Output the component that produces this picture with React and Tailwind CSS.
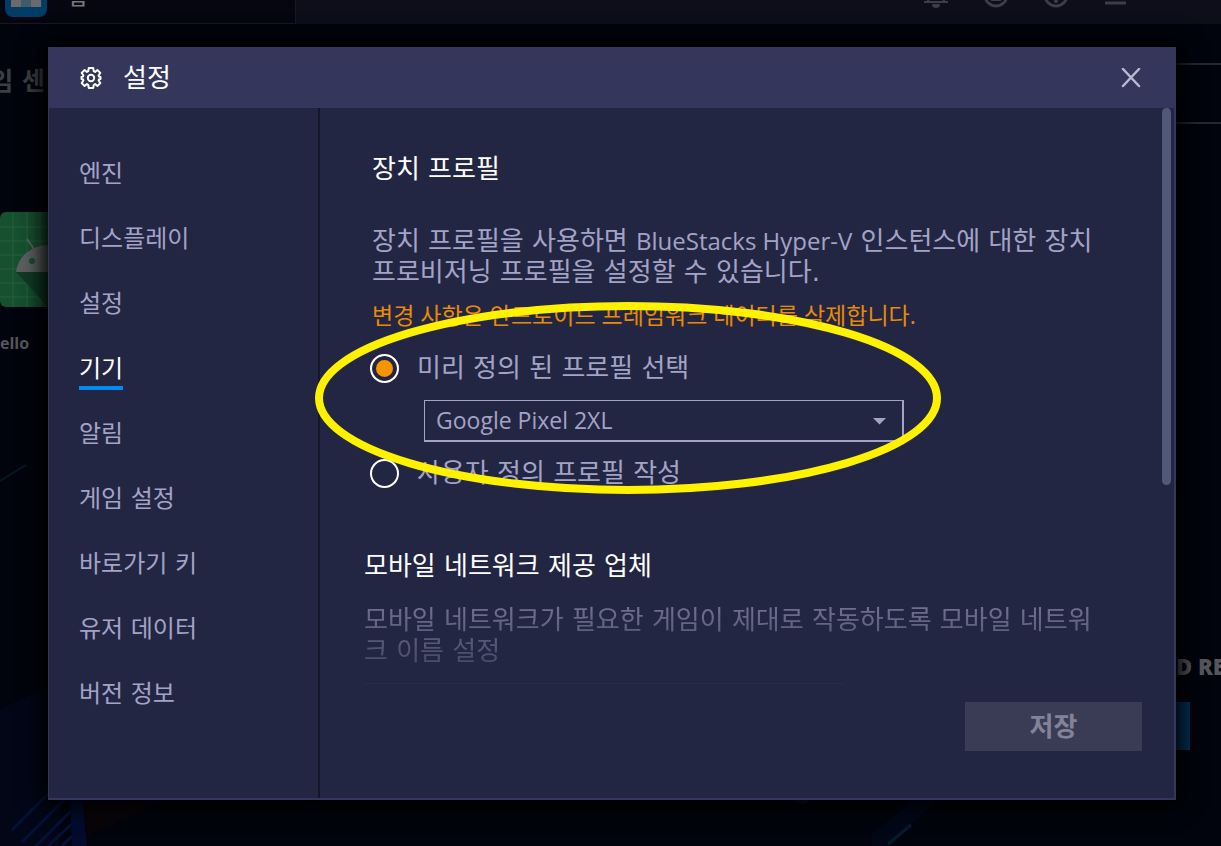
import React, { useState } from 'react';

const MENU_ITEMS = [
  { id: 'engine', label: '엔진' },
  { id: 'display', label: '디스플레이' },
  { id: 'settings', label: '설정' },
  { id: 'device', label: '기기' },
  { id: 'notifications', label: '알림' },
  { id: 'game', label: '게임 설정' },
  { id: 'shortcuts', label: '바로가기 키' },
  { id: 'userdata', label: '유저 데이터' },
  { id: 'about', label: '버전 정보' },
];

function GearIcon() {
  return (
    <svg width="24" height="24" viewBox="0 0 24 24" fill="none" stroke="white" strokeWidth="2" strokeLinejoin="round">
      <path d="M9.8 2h4.400l.6 3.200 1.300.7 2.300-1.900 2.900 2.900-1.700 2.600.4 1.100 1.500.4v2l-1.500.4-.4 1.100 1.700 2.600-2.900 2.900-2.300-1.900-1.300.7-.6 3.200H9.800l-.6-3.200-1.300-.7-2.300 1.900-2.900-2.900 1.700-2.600-.4-1.100-1.500-.4v-2l1.500-.4.4-1.100-1.700-2.600 2.900-2.900 2.300 1.900 1.300-.7z" />
      <circle cx="12" cy="12" r="3.2" />
    </svg>
  );
}

/* Dimmed app window behind the dialog */
function Backdrop() {
  return (
    <div className="relative flex min-h-screen flex-col overflow-hidden bg-[#02040d]">
      <svg className="absolute bottom-0 left-0 h-[400px] w-full" aria-hidden="true">
        <path d="M0 263 L60 235 V400 H0Z" fill="#020617" />
        <g stroke="#04103a" strokeWidth="3">
          <path d="M12 384 L50 346M22 396 L72 346M36 400 L76 360M48 400 L76 374M62 400 L76 386" />
        </g>
        <path d="M70 350h12l5 50H72z" fill="#030b2c" />
        <path d="M82 350h90l-84 40z" fill="#090408" />
        <path d="M0 35 L26 19" stroke="#071823" strokeWidth="2" />
        <path d="M872 400v-12l50-40h20l-52 52z" fill="#020717" />
        <path d="M888 398 L911 379" stroke="#041b2b" strokeWidth="3" />
        <circle cx="802" cy="350" r="8" fill="#160f12" />
      </svg>

      <div className="relative flex h-6 items-end justify-between overflow-hidden bg-[#0d0e19]">
        <div className="flex h-full w-[296px] items-end border-r border-b border-[#171823] bg-[#05060f] pb-[6px] pl-[5px]">
          <span className="flex h-9 w-[42px] shrink-0 justify-center rounded-lg bg-[#003c66]">
            <span className="mt-3 h-[14px] w-[30px] bg-[linear-gradient(90deg,#6b6b6d_33%,#3f5c6e_33%_66%,#6b6b6d_66%)]" />
          </span>
          <span className="ml-[22px] h-[33px] text-[20px] leading-7 font-medium text-[#77777c]">홈</span>
        </div>
        <svg width="216" height="8" viewBox="0 0 216 8" className="mr-[93px] mb-4" fill="none" stroke="#3c3d48" strokeWidth="3" aria-hidden="true">
          <path d="M12 2h24M15 2l3-4M33 2l-3-4" strokeWidth="2" />
          <path d="M20 4a4 4 0 0 0 8 0z" fill="#3c3d48" stroke="none" />
          <circle cx="84" cy="-5" r="11" />
          <path d="M79 0h10" strokeWidth="2" />
          <circle cx="144" cy="-5" r="11" />
          <circle cx="144" cy="1" r="2" fill="#3c3d48" stroke="none" />
          <path d="M193 3h21" />
        </svg>
      </div>

      <div className="relative flex grow items-start justify-between text-[#55565c]">
        <div className="w-12 pt-10 whitespace-nowrap">
          <div className="flex h-9 justify-end pr-[3px] text-[25px] leading-9 font-bold text-[#3d3e43]">임 센</div>
          <svg className="mt-[112px]" width="48" height="95" viewBox="0 0 48 95" aria-hidden="true">
            <rect width="60" height="95" rx="6" fill="#15502f" />
            <path d="M13 0v95M27 0v95M40 0v95M0 15h48M0 29h48M0 43h48M0 57h48M0 71h48M0 85h48" stroke="#2b5f40" />
            <path d="M16 60 L48 95V60z" fill="#0f3b25" />
            <path d="M16 60a32 30 0 0 1 32-27V60z" fill="#5c5f60" />
            <path d="M27 27l7 10" stroke="#5c5f60" strokeWidth="2" />
            <circle cx="32" cy="49" r="3" fill="#15502f" />
          </svg>
          <p className="mt-6 font-['Open_Sans'] text-[16px] leading-6 font-bold">ello</p>
        </div>
        <div className="w-[57px] overflow-hidden pt-[39px]">
          <div className="h-[61px] border-y-2 border-[#25262f]" />
          <p className="mt-[526px] font-['Open_Sans'] text-[22px] leading-8 font-extrabold whitespace-nowrap">ED RE</p>
          <div className="mt-5 h-12 w-[26px] bg-[#003257]" />
        </div>
      </div>
    </div>
  );
}

function Sidebar({ active, onSelect }) {
  return (
    <nav className="w-[271px] shrink-0 border-r-2 border-[#14162c] pt-12 pl-[30px]">
      <ul className="flex flex-col gap-[26px]">
        {MENU_ITEMS.map((item) => (
          <li key={item.id} className="h-[39px]">
            <button
              type="button"
              onClick={() => onSelect(item.id)}
              className={`h-[39px] border-b-4 text-[24px] leading-9 ${
                active === item.id ? 'border-[#008bf0] text-white' : 'border-transparent text-[#a3a3c8]'
              }`}
            >
              {item.label}
            </button>
          </li>
        ))}
      </ul>
    </nav>
  );
}

function ProfileRadio({ id, label, checked, onChange }) {
  return (
    <div className="flex h-9 items-center gap-[18px]">
      <input
        id={id}
        type="radio"
        name="profile"
        checked={checked}
        onChange={onChange}
        className="size-[29px] shrink-0 appearance-none rounded-full border-2 border-white checked:bg-[#f59300] checked:shadow-[inset_0_0_0_4px_#232642]"
      />
      <label htmlFor={id}>{label}</label>
    </div>
  );
}

function DevicePanel() {
  const [profile, setProfile] = useState('predefined');

  return (
    <section className="relative grow pt-[41px] pl-[52px] text-[26px] leading-[31px] text-[#a3a3c8]">
      <h2 className="h-10 leading-10 text-white">장치 프로필</h2>
      <p className="mt-9 whitespace-nowrap">
        장치 프로필을 사용하면 <span className="font-['Open_Sans'] text-[24px]">BlueStacks Hyper-V</span> 인스턴스에 대한 장치
        <br />
        프로비저닝 프로필을 설정할 수 있습니다.
      </p>
      <p className="mt-3 font-['Open_Sans','Noto_Sans_CJK_KR',sans-serif] text-[23px] whitespace-nowrap text-[#e88b05]">
        변경 사항은 안드로이드 프레임워크 데이터를 삭제합니다.
      </p>

      <div className="mt-[19px] -ml-[2px]">
        <ProfileRadio
          id="predefined"
          label="미리 정의 된 프로필 선택"
          checked={profile === 'predefined'}
          onChange={() => setProfile('predefined')}
        />
        <div className="relative mt-[14px] ml-[54px] w-[480px]">
          <select
            aria-label="프로필"
            className="h-[42px] w-full appearance-none border border-r-2 border-b-2 border-[#a3a3c8] bg-transparent pl-[11px] font-['Open_Sans'] text-[23px]"
          >
            <option>Google Pixel 2XL</option>
          </select>
          <svg className="pointer-events-none absolute top-[18px] right-[18px]" width="13" height="7" viewBox="0 0 13 7">
            <path d="M0 0h13L6.500 6.500z" fill="#a3a3c8" />
          </svg>
        </div>
        <div className="mt-[13px]">
          <ProfileRadio
            id="custom"
            label="사용자 정의 프로필 작성"
            checked={profile === 'custom'}
            onChange={() => setProfile('custom')}
          />
        </div>
      </div>

      <div className="mt-[55px] -ml-2">
        <h2 className="h-10 leading-10 text-white">모바일 네트워크 제공 업체</h2>
        <div className="mt-[19px] [mask-image:linear-gradient(#0009,#0004_62px,#0001)]">
          <p className="whitespace-nowrap">
            모바일 네트워크가 필요한 게임이 제대로 작동하도록 모바일 네트워
            <br />
            크 이름 설정
          </p>
          <div className="mt-4 h-px w-[480px] bg-[#a3a3c8]/60" />
        </div>
      </div>

      {/* Hand-drawn highlight around the profile options */}
      <svg
        className="pointer-events-none absolute top-[194px] left-[-5px]"
        width="626"
        height="192"
        viewBox="0 0 626 192"
        aria-hidden="true"
      >
        <ellipse cx="313" cy="96" rx="309" ry="92" fill="none" stroke="#fff200" strokeWidth="8" />
      </svg>
    </section>
  );
}

export default function App() {
  const [active, setActive] = useState('device');

  return (
    <div className="relative font-['DejaVu_Sans','Noto_Sans_CJK_KR',sans-serif]">
      <Backdrop />
      <div className="absolute inset-0 flex pt-[47px] pr-[45px] pb-[46px] pl-12">
        <div
          role="dialog"
          aria-labelledby="dialog-title"
          className="flex grow flex-col border-r-2 border-b-2 border-l border-[#34365c] bg-[#232642] shadow-[0_0_20px_6px_#000]"
        >
          <header className="-mr-[2px] -ml-px flex h-[61px] shrink-0 items-center bg-[#34365c] pr-[31px] pl-[31px]">
            <GearIcon />
            <h1 id="dialog-title" className="ml-5 grow text-[26px] leading-9 text-white">
              설정
            </h1>
            <button type="button" aria-label="닫기" className="p-1">
              <svg width="20" height="20" viewBox="0 0 20 20" stroke="#b9b9cf" strokeWidth="2.5" strokeLinecap="round">
                <path d="M2 1l16 17M18 1L2 18" />
              </svg>
            </button>
          </header>

          <div className="flex grow">
            <Sidebar active={active} onSelect={setActive} />
            <div className="flex grow flex-col">
              <DevicePanel />
              <div className="flex justify-end pr-8 pb-[47px]">
                <button type="button" className="h-[49px] w-[177px] bg-[#3a3c56] text-[26px] leading-9 font-bold text-[#838298]">
                  저장
                </button>
              </div>
            </div>
            <div className="mr-[3px] -ml-[12px] h-[377px] w-[9px] shrink-0 rounded-full bg-[#50597a]" />
          </div>
        </div>
      </div>
    </div>
  );
}
